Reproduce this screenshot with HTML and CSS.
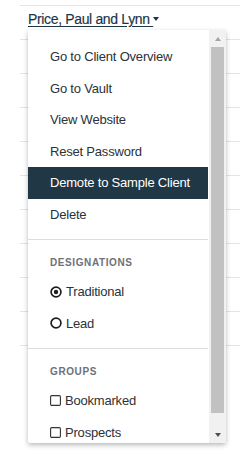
FILE: index.html
```html
<!DOCTYPE html>
<html>
<head>
<meta charset="utf-8">
<link rel="stylesheet" href="styles.css">
</head>
<body>
<div class="table">
  <div class="row first">
    <a class="client">Price, Paul and Lynn </a><span class="caret"></span>
    <div class="dropdown">
      <div class="menu-body">
        <div class="item">Go to Client Overview</div>
        <div class="item">Go to Vault</div>
        <div class="item">View Website</div>
        <div class="item">Reset Password</div>
        <div class="item active">Demote to Sample Client</div>
        <div class="item">Delete</div>
        <div class="divider"></div>
        <div class="header">DESIGNATIONS</div>
        <div class="item icon-item">
          <svg class="ico" width="12" height="12" viewBox="0 0 12 12"><circle cx="6" cy="6" r="4.9" fill="none" stroke="#1e1e1e" stroke-width="1.7"/><circle cx="6" cy="6" r="2.2" fill="#1e1e1e"/></svg>
          <span>Traditional</span>
        </div>
        <div class="item icon-item">
          <svg class="ico" width="12" height="12" viewBox="0 0 12 12"><circle cx="6" cy="6" r="4.9" fill="none" stroke="#1e1e1e" stroke-width="1.7"/></svg>
          <span>Lead</span>
        </div>
        <div class="divider"></div>
        <div class="header">GROUPS</div>
        <div class="item icon-item">
          <svg class="ico" width="11" height="11" viewBox="0 0 11 11"><rect x="0.6" y="0.6" width="9.8" height="9.8" rx="1.2" fill="none" stroke="#333" stroke-width="1.1"/></svg>
          <span>Bookmarked</span>
        </div>
        <div class="item icon-item">
          <svg class="ico" width="11" height="11" viewBox="0 0 11 11"><rect x="0.6" y="0.6" width="9.8" height="9.8" rx="1.2" fill="none" stroke="#333" stroke-width="1.1"/></svg>
          <span>Prospects</span>
        </div>
      </div>
      <div class="scrollbar">
        <div class="sb-btn"><span class="arrow-up"></span></div>
        <div class="sb-track"><div class="sb-thumb"></div></div>
        <div class="sb-btn"><span class="arrow-down"></span></div>
      </div>
    </div>
  </div>
  <div class="row"></div>
  <div class="row"></div>
  <div class="row"></div>
  <div class="row"></div>
  <div class="row"></div>
  <div class="row"></div>
  <div class="row"></div>
  <div class="row"></div>
  <div class="row"></div>
</div>
</body>
</html>
```
FILE: styles.css
```css
* { box-sizing: border-box; }
html, body { margin: 0; padding: 0; background: #fff; }
body {
  font-family: "Liberation Sans", Arial, sans-serif;
  width: 240px;
  height: 458px;
  overflow: hidden;
}
.table {
  margin-top: 5px;
  margin-left: 20px;
  border-bottom: 1px solid #e4e4e4;
}
.row {
  height: 34px;
  border-top: 1px solid #e4e4e4;
}
.row.first {
  position: relative;
  padding: 4px 0 0 8px;
  line-height: 17px;
  z-index: 2;
}
.client {
  font-size: 14px;
  letter-spacing: -0.35px;
  color: #1b3446;
  text-decoration: underline;
  text-underline-offset: 2px;
  -webkit-text-stroke: 0.15px #1b3446;
}
.caret {
  display: inline-block;
  width: 0;
  height: 0;
  border-left: 3.5px solid transparent;
  border-right: 3.5px solid transparent;
  border-top: 4px solid #1b3446;
  vertical-align: 3px;
}
.dropdown {
  position: absolute;
  top: 24px;
  left: 8px;
  width: 198px;
  height: 413px;
  display: flex;
  background: #fff;
  box-shadow: 0 2px 5px rgba(0,0,0,0.28);
  border-radius: 2px;
}
.menu-body {
  flex: 1;
  overflow: hidden;
  padding-top: 11px;
  padding-right: 1px;
}
.item {
  padding: 6px 22px;
  font-size: 13px;
  letter-spacing: -0.2px;
  line-height: 19.5px;
  color: #2b3238;
  white-space: nowrap;
}
.item.active {
  background: #203746;
  color: #fff;
}
.icon-item {
  display: flex;
  align-items: center;
  gap: 4px;
}
.ico { flex: none; }
.divider {
  height: 1px;
  background: #dddddd;
  margin: 9px 0;
}
.header {
  padding: 5px 22px 5px;
  font-size: 10px;
  line-height: 17px;
  font-weight: bold;
  letter-spacing: 0.6px;
  color: #6d7178;
}
.scrollbar {
  width: 17px;
  flex: none;
  display: flex;
  flex-direction: column;
  background: #f1f1f1;
}
.sb-btn {
  height: 17px;
  display: flex;
  align-items: center;
  justify-content: center;
}
.sb-track {
  flex: 1;
  padding: 0 2px;
}
.sb-thumb {
  height: 366px;
  background: #c1c1c1;
}
.arrow-up {
  width: 0; height: 0;
  border-left: 3.5px solid transparent;
  border-right: 3.5px solid transparent;
  border-bottom: 4px solid #a3a3a3;
}
.arrow-down {
  width: 0; height: 0;
  border-left: 3.5px solid transparent;
  border-right: 3.5px solid transparent;
  border-top: 4px solid #505050;
}
```
